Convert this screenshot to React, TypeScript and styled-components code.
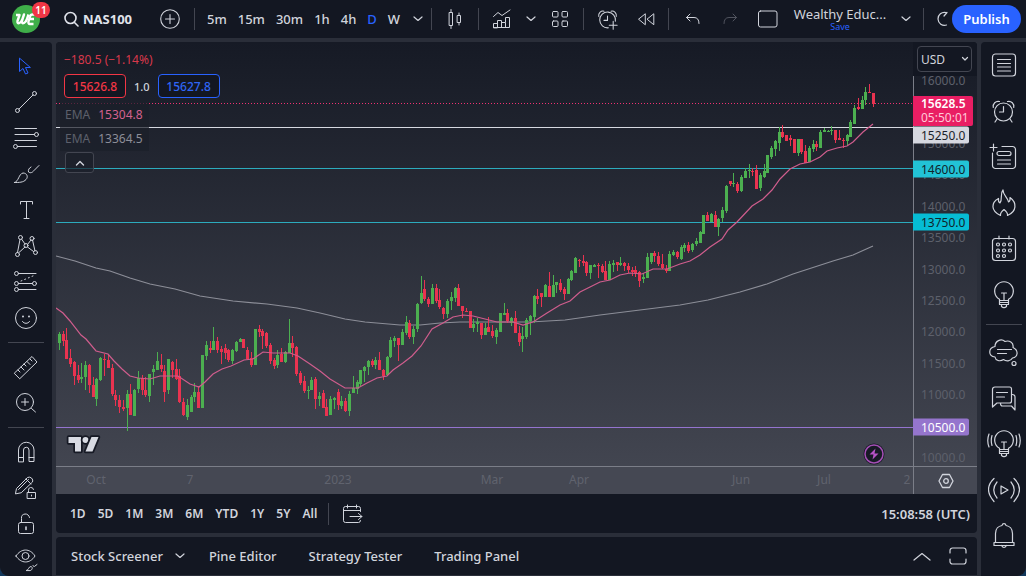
import React from "react";
import styled, { createGlobalStyle, css } from "styled-components";

const GlobalStyle = createGlobalStyle`
  * { box-sizing: border-box; }
  html, body { margin: 0; padding: 0; background: #12385c; }
  body, button, select {
    font-family: "Noto Sans", "Open Sans", sans-serif;
    font-size: 13px;
    color: #d1d4dc;
  }
  button { background: none; border: 0; padding: 0; cursor: pointer; }
  a { color: inherit; text-decoration: none; }
`;

const Page = styled.div`
  display: flex;
  flex-direction: column;
  gap: 4px;
  height: 100vh;
  min-height: 320px;
  overflow: hidden;
  background: #2a2e39;
  border-radius: 0 0 9px 9px;
`;

const TopBar = styled.header`
  display: flex;
  align-items: center;
  flex: none;
  height: 38px;
  padding: 0 5px 0 12px;
  background: #131722;
  overflow: hidden;
`;

const Logo = styled.a`
  position: relative;
  display: flex;
  flex: none;
  width: 28px;
  height: 28px;
  margin-right: 23px;
`;

const Badge = styled.span`
  position: absolute;
  left: 20px;
  top: -3px;
  width: 18px;
  height: 16px;
  border-radius: 8px;
  background: #f23645;
  color: #fff;
  font-size: 10px;
  line-height: 16px;
  font-weight: 600;
  text-align: center;
`;

const SymbolButton = styled.button`
  display: flex;
  align-items: center;
  gap: 4px;
  flex: none;
  width: 91px;
  font-weight: 700;
  color: #e0e3eb;
`;

const BarButton = styled.button<{ $w: number; $dim?: boolean; $end?: boolean }>`
  display: flex;
  align-items: center;
  justify-content: ${(p) => (p.$end ? "flex-end" : "center")};
  flex: none;
  width: ${(p) => p.$w}px;
  height: 38px;
  color: ${(p) => (p.$dim ? "#50535e" : "#d1d4dc")};
`;

const BarDivider = styled.span`
  flex: none;
  width: 1px;
  height: 22px;
  background: #434651;
`;

const Intervals = styled.div`
  display: flex;
  padding-left: 6px;
`;

const Interval = styled.button<{ $active?: boolean }>`
  padding: 0 5px 0 6px;
  line-height: 24px;
  font-weight: 500;
  color: ${(p) => (p.$active ? "#2962ff" : "#d1d4dc")};
`;

const LayoutName = styled.button`
  display: flex;
  flex-direction: column;
  align-items: center;
  flex: none;
  width: 98px;
  font-size: 13px;
  line-height: 16px;
  white-space: nowrap;
`;

const SaveText = styled.span`
  font-size: 9px;
  line-height: 10px;
  color: #2962ff;
`;

const Spacer = styled.span<{ $max?: number }>`
  flex: ${(p) => (p.$max ? `0 1 ${p.$max}px` : "1")};
`;

const Publish = styled.button`
  flex: none;
  width: 69px;
  height: 28px;
  border-radius: 14px;
  background: #2962ff;
  color: #fff;
  font-weight: 600;
`;

const Body = styled.div`
  display: grid;
  grid-template-columns: 52px minmax(0, 1fr) 45px;
  gap: 4px;
  flex: 1;
  min-height: 0;
`;

const SideDivider = styled.span`
  flex: none;
  width: 36px;
  height: 1px;
  margin: 6px 0;
  background: #434651;
`;

const SideBar = styled.nav<{ $right?: boolean }>`
  display: flex;
  flex-direction: column;
  align-items: center;
  overflow: hidden;
  background: #131722;
  ${(p) =>
    p.$right
      ? css`
          border-radius: 4px 0 0 0;
          ${SideDivider} {
            margin-bottom: 4px;
          }
        `
      : css`
          padding-top: 6px;
          border-radius: 0 4px 0 0;
        `}
`;

const SideButton = styled.button<{ $h: number; $active?: boolean }>`
  display: flex;
  align-items: center;
  justify-content: center;
  flex: none;
  width: 100%;
  height: ${(p) => p.$h}px;
  color: ${(p) => (p.$active ? "#2962ff" : "#d1d4dc")};
`;

const Center = styled.main`
  display: flex;
  flex-direction: column;
  gap: 4px;
  min-height: 0;
  padding-bottom: 1px;
`;

const ChartPanel = styled.section`
  display: flex;
  flex-direction: column;
  flex: 1;
  min-height: 0;
  border-radius: 4px;
  overflow: hidden;
  background: #131722;
`;

const ChartGrid = styled.div`
  display: grid;
  grid-template-columns: minmax(0, 1fr) 64px;
  grid-template-rows: minmax(0, 1fr) 28px;
  flex: 1;
  min-height: 0;
  background: linear-gradient(#161a25, #454853);
`;

const Plot = styled.div`
  position: relative;
  min-height: 0;
`;

const Drawing = styled.svg`
  position: absolute;
  inset: 0;
  width: 100%;
  height: 100%;
`;

const Legend = styled.div`
  position: absolute;
  left: 4px;
  top: 8px;
  display: flex;
  flex-direction: column;
  align-items: flex-start;
`;

const Change = styled.div`
  padding-left: 4px;
  line-height: 20px;
  font-size: 12px;
  color: #d8384b;
`;

const Quotes = styled.div`
  display: flex;
  align-items: center;
  gap: 8px;
  padding: 4px 4px 5px;
  font-size: 11px;
  font-weight: 500;
`;

const Quote = styled.button<{ $buy?: boolean }>`
  width: 62px;
  height: 24px;
  border: 1px solid ${(p) => (p.$buy ? "#2962ff" : "#f23645")};
  border-radius: 4px;
  background: #131722;
  font-size: 12px;
  font-weight: 500;
  color: ${(p) => (p.$buy ? "#2f66f5" : "#f23645")};
`;

const Study = styled.div<{ $color: string }>`
  display: flex;
  gap: 8px;
  width: 89px;
  padding-left: 5px;
  line-height: 24px;
  font-size: 12px;
  color: ${(p) => p.$color};
  background: rgba(27, 31, 42, 0.7);
`;

const StudyName = styled.span`
  color: #5d606b;
`;

const Collapse = styled.button`
  display: flex;
  align-items: center;
  justify-content: center;
  width: 29px;
  height: 21px;
  margin: 1px 0 0 5px;
  border: 1px solid #434651;
  border-radius: 3px;
  background: rgba(27, 31, 42, 0.7);
`;

const Watermark = styled.a`
  position: absolute;
  left: 9px;
  bottom: 10px;
  display: flex;
`;

const Flash = styled.button`
  position: absolute;
  left: 95.4%;
  bottom: 1px;
  display: flex;
  transform: translateX(-50%);
`;

const PriceAxis = styled.div`
  position: relative;
  min-height: 0;
`;

const AxisLine = styled.span`
  position: absolute;
  left: 0;
  top: 34px;
  bottom: 0;
  width: 1px;
  background: #7b7e88;
`;

const Price = styled.span`
  position: absolute;
  left: 8px;
  transform: translateY(-50%);
  font-size: 12px;
  line-height: 16px;
  color: #5d606b;
`;

const PriceTag = styled.span<{ $bg: string; $fg: string; $wide?: boolean }>`
  position: absolute;
  left: 0;
  width: ${(p) => (p.$wide ? 60 : 56)}px;
  padding-left: 8px;
  border-radius: 0 2px 2px 0;
  transform: translateY(-50%);
  font-size: 12px;
  font-weight: ${(p) => (p.$wide ? 600 : 400)};
  line-height: ${(p) => (p.$wide ? 14 : 17)}px;
  padding-block: ${(p) => (p.$wide ? 1 : 0)}px;
  background: ${(p) => p.$bg};
  color: ${(p) => p.$fg};
`;

const Countdown = styled.span`
  display: block;
  font-weight: 400;
  color: #ffc9d8;
`;

const CurrencyBox = styled.div`
  position: absolute;
  left: 0;
  right: 0;
  top: 0;
  height: 34px;
  padding: 4px 5px 0 4px;
  background: #131722;

  select {
    appearance: none;
    display: block;
    width: 100%;
    height: 26px;
    padding: 0 0 0 3px;
    border: 1px solid #434651;
    border-radius: 4px;
    background: #131722;
    font-size: 12px;
  }
  svg {
    position: absolute;
    right: 8px;
    top: 14px;
    pointer-events: none;
  }
`;

const TimeAxis = styled.div`
  position: relative;
  overflow: hidden;
  border-top: 1px solid #7b7e88;
  background: #454853;
`;

const TimeLabel = styled.span`
  position: absolute;
  transform: translateX(-50%);
  font-size: 12px;
  line-height: 26px;
  color: #60636e;
`;

const AxisCorner = styled.button`
  display: flex;
  align-items: center;
  justify-content: center;
  border-top: 1px solid #7b7e88;
  border-left: 1px solid #7b7e88;
  background: #454853;
`;

const RangeBar = styled.div`
  display: flex;
  align-items: center;
  flex: none;
  height: 39px;
  padding: 0 7px 0 8px;
`;

const Range = styled.button`
  padding: 0 6px;
  font-size: 12px;
  font-weight: 600;
`;

const Clock = styled.button`
  font-size: 13px;
  font-weight: 600;
`;

const TabPanel = styled.section`
  display: flex;
  align-items: center;
  flex: none;
  height: 38px;
  padding-left: 15px;
  border-radius: 4px 4px 0 0;
  background: #131722;
`;

const Tab = styled.button<{ $menu?: boolean }>`
  display: flex;
  align-items: center;
  gap: 12px;
  margin-right: ${(p) => (p.$menu ? 24 : 32)}px;
  font-weight: 500;
  white-space: nowrap;
`;

/* ---------- icons ---------- */

type IconProps = {
  w: number;
  h?: number;
  box?: string;
  sw?: number;
  children: React.ReactNode;
};

const Icon = ({ w, h = w, box, sw = 1, children }: IconProps) => (
  <svg
    width={w}
    height={h}
    viewBox={box || `0 0 ${w} ${h}`}
    fill="none"
    stroke="currentColor"
    strokeWidth={sw}
    strokeLinecap="round"
    strokeLinejoin="round"
    aria-hidden="true"
  >
    {children}
  </svg>
);

const ChevronDown = () => (
  <Icon w={10} h={6} sw={1.2}>
    <path d="M1 1l4 3.500L9 1" />
  </Icon>
);

const AlarmBody = () => (
  <>
    <circle cx="12" cy="13" r="9" />
    <path d="M12 7.500V13H8" />
    <path d="M1.800 8.500A5 5 0 0 1 8 2.500M22.200 8.500A5 5 0 0 0 16 2.500" />
    <path d="M5.500 20L3.500 23M18.500 20l2 3" />
  </>
);

const BulbBody = () => (
  <>
    <path d="M8.500 18.500v-1.300a9.300 9.300 0 1 1 9 0v1.300" />
    <path d="M13 18.500V11M10.500 11h5M8.500 18.500h9v4h-9zM8.500 20.500h9M10.500 22.500v2q2.500 2.500 5 0v-2" />
  </>
);

const leftTools: { label: string; active?: boolean; icon: React.ReactNode }[] = [
  {
    label: "Cursor",
    active: true,
    icon: (
      <Icon w={28}>
        <path d="M7.500 6.500v13l3.500-3 2.500 5.500 2.500-1-2.500-5.500h4.500z" />
      </Icon>
    ),
  },
  {
    label: "Trend line",
    icon: (
      <Icon w={28}>
        <circle cx="5.500" cy="22.500" r="2" />
        <circle cx="22.500" cy="5.500" r="2" />
        <path d="M7 21L21 7" />
      </Icon>
    ),
  },
  {
    label: "Fib retracement",
    icon: (
      <Icon w={28}>
        <path d="M3 4.500h21.500M3 10.500h19.500M3 16.500h21.500M6 22.500h18.500" />
        <circle cx="24.500" cy="10.500" r="2" />
        <circle cx="3.500" cy="22.500" r="2" />
      </Icon>
    ),
  },
  {
    label: "Brush",
    icon: (
      <Icon w={28}>
        <path d="M2.500 22.500c4.500-1 4-8.500 8.500-9.500 4 0 5.500 4 3 6.500-2.500 3-7 3-11.500 3z" />
        <path d="M19 7c-2 1-3 3-2.500 5 2 1.500 4 .5 5.500-1.500l5-5" />
      </Icon>
    ),
  },
  {
    label: "Text",
    icon: (
      <Icon w={28}>
        <path d="M8.500 8V5.500h12V8M14.500 5.500v17M12 22.500h5" />
      </Icon>
    ),
  },
  {
    label: "Pattern",
    icon: (
      <Icon w={28}>
        <path d="M5.500 20.500L8 7.500M9.500 7l3.500 5M15.500 12.500L19 8M20.500 8l2.500 11M7 20.500l6-5.500M15.500 15l6 4.500" />
        <circle cx="8.500" cy="5.500" r="2" />
        <circle cx="20" cy="6.500" r="2" />
        <circle cx="14" cy="13.500" r="2" />
        <circle cx="5.500" cy="22.500" r="2" />
        <circle cx="23.500" cy="20.500" r="2" />
      </Icon>
    ),
  },
  {
    label: "Position",
    icon: (
      <Icon w={28}>
        <path d="M7 5.500h17M7 15.500h13.500M7 21.500h17" />
        <path d="M9 13l13-5.500" strokeDasharray="1 3" />
        <circle cx="4.500" cy="5.500" r="2" />
        <circle cx="4.500" cy="15.500" r="2" />
        <circle cx="22.500" cy="15.500" r="2" />
        <circle cx="4.500" cy="21.500" r="2" />
      </Icon>
    ),
  },
  {
    label: "Icons",
    icon: (
      <Icon w={28}>
        <circle cx="14" cy="14" r="10.500" />
        <path d="M10.500 17.500c1.500 2.500 5.500 2.500 7 0" />
        <path d="M11 12.500v.1M17 12.500v.1" strokeWidth="2" />
      </Icon>
    ),
  },
  {
    label: "Measure",
    icon: (
      <Icon w={28}>
        <path d="M2.500 20L20 3.500l5 5.500L8 25.500z" />
        <path d="M6 17l2 2M9 14l3 3M12 11l2 2M15 8.500l3 3M18 6l2 2" />
      </Icon>
    ),
  },
  {
    label: "Zoom in",
    icon: (
      <Icon w={28}>
        <circle cx="13" cy="13" r="8.500" />
        <path d="M19.500 19.500L23.500 23M9.500 13h7M13 9.500v7" />
      </Icon>
    ),
  },
  {
    label: "Magnet",
    icon: (
      <Icon w={28}>
        <path d="M6.500 23.500V12a7.500 7.500 0 0 1 15.500 0v11.500h-5V12a2.700 2.700 0 0 0-5.500 0v11.500zM6.500 19.500h5M17 19.500h5" />
      </Icon>
    ),
  },
  {
    label: "Stay in drawing mode",
    icon: (
      <Icon w={28}>
        <path d="M3.500 19.500l1-5L15.500 3.500q2-1 4 .5 2 2 1 4L9.500 18.500zM6.500 15.500l10-10M14 5l5 5" />
        <path d="M15.500 18.500h8v6h-8zM16.500 18.500v-2a2.500 2.500 0 0 1 5-1M19.500 21v1" />
      </Icon>
    ),
  },
  {
    label: "Lock drawings",
    icon: (
      <Icon w={28}>
        <rect x="6.500" y="12.500" width="15" height="11" rx="2" />
        <path d="M9.500 12.500V8.500a4 4 0 0 1 8-1" />
        <path d="M14 17v2.500" strokeWidth="1.600" />
      </Icon>
    ),
  },
  {
    label: "Hide drawings",
    icon: (
      <Icon w={28}>
        <path d="M4 10c5-8 14-8 19 0-5 8-14 8-19 0z" />
        <circle cx="13.500" cy="10" r="3.500" />
        <path d="M14.500 24.500c2.500-.5 2-4 4.500-4 2 .5 1.500 3.500-.5 4zM21 19.500c.5 1.500 1 1.500 2 .5l2-1.500" />
      </Icon>
    ),
  },
];

const rightTools: { label: string; icon: React.ReactNode }[] = [
  {
    label: "Watchlist",
    icon: (
      <Icon w={30} sw={1.200}>
        <rect x="3.500" y="4" width="23" height="22" rx="3" />
        <path d="M8.500 9.500h13M8.500 13.500h13M8.500 17h13M8.500 21h13" />
      </Icon>
    ),
  },
  {
    label: "Alerts",
    icon: (
      <Icon w={25} box="0 0 24 25" sw={1.200}>
        <AlarmBody />
      </Icon>
    ),
  },
  {
    label: "Hotlists",
    icon: (
      <Icon w={30} sw={1.200}>
        <path d="M13 4.500h10.500a3 3 0 0 1 3 3v16a3 3 0 0 1-3 3h-17a3 3 0 0 1-3-3V11M1 5.500h7M4.500 2v7" />
        <rect x="8" y="9.500" width="14" height="4" rx="2" />
        <path d="M8.500 18h13M8.500 22h13" />
      </Icon>
    ),
  },
  {
    label: "Trending",
    icon: (
      <Icon w={30} sw={1.200}>
        <path d="M11.500 27.500C1.500 23 2 14.500 9.500 10.500q-.5 3.500 1.500 4.500C14 11 10.500 6 14 2c0 5.500 4.500 7 5.500 12q2-1 1.500-4.500c7 5 7 14-2.500 18 .5-2.500-1-4-3.500-6-2.500 2-4 3.500-3.500 6z" />
      </Icon>
    ),
  },
  {
    label: "Calendar",
    icon: (
      <Icon w={30} sw={1.200}>
        <rect x="3.500" y="4.500" width="23" height="22" rx="3" />
        <path d="M10 2v3M20 2v3" />
        {[
          [9, 10.500], [15, 10.500], [21, 10.500],
          [9, 16.500], [15, 16.500], [21, 16.500],
          [9, 22], [15, 22],
        ].map(([x, y]) => (
          <circle key={`${x}-${y}`} cx={x} cy={y} r="1.500" />
        ))}
      </Icon>
    ),
  },
  {
    label: "My ideas",
    icon: (
      <Icon w={26} h={28} box="0 -1 26 28" sw={1.200}>
        <BulbBody />
      </Icon>
    ),
  },
  {
    label: "Public chats",
    icon: (
      <Icon w={30} sw={1.200}>
        <path d="M6 9.500C6 4 12 1 16 4.500c4-1.500 9 1 8 6 6 3 5 9.500-.5 10.500-2 3.500-6.500 3.500-9 1.500-3.500 2.500-8 1-8.500-2.500C-1 19-1 11 6 9.500z" />
        <path d="M8.500 12.500h14M8.500 16.500h9" />
        <circle cx="25" cy="26.500" r="2" />
      </Icon>
    ),
  },
  {
    label: "Private chats",
    icon: (
      <Icon w={30} sw={1.200}>
        <path d="M6 4h14.500a2 2 0 0 1 2 2v12a2 2 0 0 1-2 2H8l-4.500 4V6.500A2.500 2.500 0 0 1 6 4zM7.500 9.500h11M7.500 14h8M22.500 11.500h1a2.500 2.500 0 0 1 2.500 2.500v13l-3.500-4h-9q-2 0-2-2.500" />
      </Icon>
    ),
  },
  {
    label: "Ideas stream",
    icon: (
      <Icon w={34} h={28} box="-4 -1 34 28" sw={1.200}>
        <BulbBody />
        <path d="M1 4.500q-1.500 5 0 10M-2 3q-2.500 6.500 0 13M25 4.500q1.500 5 0 10M28 3q2.500 6.500 0 13" />
      </Icon>
    ),
  },
  {
    label: "Streams",
    icon: (
      <Icon w={32} h={28} sw={1.200}>
        <path d="M13 10v8l7-4zM9 6q-6.500 8 0 16M6 2.500Q-5 13 6 25.500M23 6q6.500 8 0 16M26 2.500Q37 13 26 25.500" />
      </Icon>
    ),
  },
  {
    label: "Notifications",
    icon: (
      <Icon w={30} sw={1.200}>
        <path d="M6.500 21.500V12.500C6.500 8 9.500 5 13 4.500c.5-2.500 3.500-2.500 4 0 3.500.5 6.500 3.500 6.500 8v9M5 21.500h20v3H5zM12.500 24.500q2.500 4 5 0" />
      </Icon>
    ),
  },
];

/* ---------- chart data ---------- */

// One entry per session: direction, then high, body top, body bottom, low in plot units.
const SESSIONS = `
g332 334 343 350,r331 334 341 346,r328 340 359 359,r349 358 364 367,r361 362 376 385,r365 375 380 383,
g363 377 379 383,g361 365 377 390,r364 365 385 393,r377 385 397 397,g378 379 399 406,g357 358 380 381,
r354 359 360 376,r354 360 368 368,r364 368 394 396,r390 395 400 406,r395 400 407 413,r400 407 409 411,
g390 394 408 431,r384 394 415 415,g389 390 416 416,g371 378 389 393,r375 378 390 395,r377 390 395 397,
g374 374 396 402,g365 369 372 385,g352 361 370 370,r354 365 369 372,r365 371 392 402,g359 359 390 394,
r361 362 370 378,r359 369 379 380,r369 376 402 403,r398 402 415 416,g399 405 417 420,g395 397 412 412,
g383 392 397 402,r386 392 408 408,g355 355 408 408,g341 345 356 360,r341 348 350 353,g327 341 350 350,
r337 341 350 353,r346 349 352 364,r344 348 353 359,r349 350 360 362,g349 350 361 364,g341 342 351 352,
g338 339 342 342,r339 339 348 348,r347 350 359 359,r352 358 365 367,g329 329 365 365,r325 329 332 337,
r329 331 336 349,r332 333 346 348,r343 345 361 364,r358 360 366 369,g350 355 365 368,r348 354 362 362,
g351 352 362 363,g319 343 353 353,r336 343 348 357,r346 347 374 376,r371 373 383 385,r376 381 391 393,
g386 390 391 399,g377 380 390 390,r377 379 399 409,g392 396 399 406,r390 393 408 408,r399 407 416 416,
g396 399 415 415,g397 398 400 409,r389 392 405 410,g396 401 406 409,r398 401 411 412,g391 394 411 416,
g376 388 393 393,g380 382 389 394,g370 370 384 386,g366 367 371 382,g360 361 367 375,r359 361 365 367,
g357 360 365 369,r352 360 370 370,r369 370 376 380,g356 357 375 375,g337 340 357 358,g336 338 341 347,
r338 338 345 361,g329 332 345 345,g316 322 333 335,r320 323 337 339,g326 329 337 344,g303 304 329 332,
g276 293 303 304,r280 289 299 301,r297 299 304 307,g284 288 304 304,r284 288 301 303,r289 300 307 309,
r307 308 314 319,g299 301 314 318,g292 297 301 310,g287 288 298 302,r284 288 306 306,r306 306 311 318,
r308 311 312 312,r311 311 328 328,g319 324 328 332,g318 322 324 332,r323 323 335 339,g323 328 335 335,
r317 327 332 332,r325 331 336 338,g328 330 337 344,g313 313 332 332,g303 313 315 315,r309 313 321 323,
g317 318 323 326,r311 318 333 333,r326 333 342 346,g327 336 339 352,g318 320 337 339,g315 316 321 335,
g295 296 317 323,r289 296 299 304,r293 293 297 307,g284 285 297 297,r272 286 297 297,g275 285 297 297,
g282 282 285 293,r279 283 290 292,r287 289 294 300,g278 279 294 294,g270 271 280 281,g257 258 273 273,
r259 260 261 267,r255 261 263 266,r261 262 273 276,g265 265 273 279,g264 265 267 267,r263 265 266 278,
r264 266 272 273,r261 271 280 280,g261 264 280 280,g260 263 265 272,r262 262 265 271,g257 263 265 266,
r262 263 266 271,r263 266 270 273,r267 270 272 276,r266 270 273 277,r271 272 281 287,g273 277 279 283,
g253 257 278 278,g253 253 262 264,r251 253 256 262,r252 256 264 266,r254 264 268 269,r265 269 271 273,
g251 254 271 271,g250 252 255 256,r251 252 257 259,g245 247 259 260,g243 245 248 252,r242 245 251 253,
g243 244 250 252,g238 241 244 246,g231 232 243 243,g215 215 234 234,r212 215 221 221,g213 214 222 222,
r211 215 227 227,g218 219 227 236,g207 210 218 222,g185 186 211 213,r181 181 184 186,g173 183 184 187,
r182 184 191 193,g175 177 191 192,g168 171 178 178,g164 170 171 178,r168 171 172 176,r165 170 189 189,
g173 175 188 191,g164 171 177 178,g155 155 173 173,g146 148 157 159,g140 141 149 156,g127 132 143 151,
r125 132 137 138,r135 135 141 141,r135 138 140 146,r139 139 153 153,g139 139 153 156,r139 139 152 154,
r145 151 163 163,g146 148 162 162,g140 144 149 152,r141 144 147 151,g130 132 148 148,g128 130 132 132,
g130 131 132 132,g126 130 131 135,r130 130 140 143,r130 138 140 140,r138 140 141 148,g134 135 141 145,
g120 122 137 137,g105 108 124 124,r98 107 109 110,g96 100 109 109,g87 92 100 105,r84 92 93 93,
r93 93 104 107`
  .replace(/\n/g, "")
  .split(",")
  .map((entry, index) => {
    const [high, top, bottom, low] = entry.slice(1).split(" ").map(Number);
    const x = Math.round(58.8 + index * 3.769);
    return { up: entry[0] === "g", x, high, top, bottom, low };
  });

const FAST_EMA =
  "56,308 63,313 70,321 81,335 86,339 96,351 108,354 114,361 122,369 130,376 138,378 150,379 160,376 178,376 190,384 199,387 205,382 213,374 222,369 231,366 244,360 253,359 263,352 273,353 290,353 298,356 310,364 320,371 330,379 345,388 358,388 367,383 377,378 387,376 393,370 403,363 412,356 421,346 432,329 443,323 453,317 463,315 473,316 497,322 513,322 523,325 533,322 547,313 560,305 570,301 580,292 590,287 600,282 610,280 620,275 630,273 642,274 653,269 667,269 680,264 690,261 700,255 710,247 722,239 728,230 737,222 752,206 763,199 772,190 780,179 790,169 800,164 810,162 820,157 827,151 837,148 847,146 853,142 863,132 873,124";

const SLOW_EMA =
  "56,256 75,261 96,268 110,271 130,278 150,284 175,289 200,296 233,301 267,304 297,308 320,313 345,319 365,322 400,325 420,325 440,323 460,322 500,322 530,322 565,320 600,315 640,310 680,305 708,300 740,292 767,284 793,274 833,261 853,255 873,246";

const AXIS_PRICES = [16000, 15000, 14500, 14000, 13500, 13000, 12500, 12000, 11500, 11000, 10500, 10000];

const atUnit = (y: number) => `${((y - 42) / 424) * 100}%`;
const atPrice = (price: number) => atUnit(81 + (16000 - price) * 0.06285);

const MONTHS: [string, number][] = [
  ["Oct", 96], ["7", 190], ["2023", 338], ["Mar", 492], ["Apr", 579], ["Jun", 741], ["Jul", 824], ["2", 907],
];

const Chart = () => (
  <Drawing viewBox="56 42 857 424" preserveAspectRatio="none" aria-label="NAS100 daily candles">
    <g fill="none" strokeWidth="1">
      <path d="M56 103.500H913" stroke="#ee3272" strokeDasharray="1 2" />
      <path d="M56 127.500H913" stroke="#d6d8e0" />
      <path d="M56 168.500H913M56 222.500H913" stroke="#2cabbd" />
      <path d="M56 427.500H913" stroke="#9474cf" />
      <polyline points={SLOW_EMA} stroke="#8c8e98" strokeWidth="1.200" />
    </g>
    <g shapeRendering="crispEdges">
      {SESSIONS.map((s) => (
        <g key={s.x} fill={s.up ? "#4caf50" : "#e93350"}>
          <rect x={s.x} y={s.high} width="1" height={Math.max(1, s.low - s.high)} />
          <rect x={s.x - 1} y={s.top} width="3" height={Math.max(1, s.bottom - s.top)} />
        </g>
      ))}
    </g>
    <polyline points={FAST_EMA} fill="none" stroke="#cf5d8d" strokeWidth="1.200" />
  </Drawing>
);

export default function App() {
  return (
    <>
      <GlobalStyle />
      <Page>
        <TopBar>
          <Logo href="#" aria-label="Account">
            <svg width="28" height="28" viewBox="0 0 28 28" aria-hidden="true">
              <circle cx="14" cy="14" r="14" fill="#3fae49" />
              <g fill="none" stroke="#fff" strokeWidth="2.400" strokeLinejoin="round">
                <path d="M4 10h3.500L5.500 16q-.5 3 2 2 2-1 3-4l1.500-4.500-2 6.500q-.5 3 2 2 2-1 3-4l1.500-4.500" />
                <path d="M24 9.500h-3.500q-2 0-2.500 2l-1.500 5q-.5 2.500 1.500 2.500h3.500M17.500 14h4.500" />
              </g>
            </svg>
            <Badge>11</Badge>
          </Logo>
          <SymbolButton>
            <Icon w={16} sw={1.600}>
              <circle cx="7.500" cy="7" r="5.500" />
              <path d="M11.500 11.500L15 15" />
            </Icon>
            NAS100
          </SymbolButton>
          <BarButton $w={32} aria-label="Compare">
            <Icon w={20} sw={1.100}>
              <circle cx="10" cy="10" r="9.300" />
              <path d="M10 5.500v9M5.500 10h9" />
            </Icon>
          </BarButton>
          <Spacer $max={8} />
          <BarDivider />
          <Intervals>
            {["5m", "15m", "30m", "1h", "4h", "D", "W"].map((t) => (
              <Interval key={t} $active={t === "D"}>{t}</Interval>
            ))}
          </Intervals>
          <BarButton $w={26} aria-label="More intervals"><ChevronDown /></BarButton>
          <BarDivider />
          <BarButton $w={46} aria-label="Candles">
            <Icon w={16} h={20}>
              <path d="M2.500 3.500h3v13h-3zM4 .5v3M4 16.500v3M10.500 6.500h3v7h-3zM12 4v2.500M12 13.500V16" />
            </Icon>
          </BarButton>
          <BarDivider />
          <BarButton $w={46} aria-label="Indicators">
            <Icon w={20}>
              <path d="M1.500 18.500v-4h4v4zM5.500 18.500v-7h4v7M9.500 13.500h4v5M13.500 13V8.500h4v10H1.500M1.500 7.500L6 3.500l4 3 8-5.500" />
            </Icon>
          </BarButton>
          <BarButton $w={12} aria-label="Favourite indicators"><ChevronDown /></BarButton>
          <BarButton $w={46} aria-label="Templates">
            <Icon w={18}>
              <rect x="1.500" y="1.500" width="5.500" height="5.500" rx="1" />
              <rect x="11" y="1.500" width="5.500" height="5.500" rx="1" />
              <rect x="1.500" y="11" width="5.500" height="5.500" rx="1" />
              <rect x="11" y="11" width="5.500" height="5.500" rx="1" />
            </Icon>
          </BarButton>
          <BarDivider />
          <BarButton $w={46} aria-label="Create alert">
            <Icon w={21} box="0 0 24 24" sw={1.200}>
              <path d="M13 21.500A9 9 0 1 1 21 14M12 8v5H8M2 8.500A5 5 0 0 1 8 2.500M22 8.500A5 5 0 0 0 16 2.500M18.500 14v9M14 18.500h9" />
            </Icon>
          </BarButton>
          <BarButton $w={32} aria-label="Replay">
            <Icon w={18} h={14}>
              <path d="M8 2L1.500 7.200 8 12.500zM16.500 2L10 7.200l6.500 5.300z" />
            </Icon>
          </BarButton>
          <Spacer $max={6} />
          <BarDivider />
          <BarButton $w={46} aria-label="Undo">
            <Icon w={15} h={12}>
              <path d="M5 1L1.500 4.500 5 8M1.500 4.500H9q5 0 5 6" />
            </Icon>
          </BarButton>
          <BarButton $w={30} $dim aria-label="Redo">
            <Icon w={15} h={12}>
              <path d="M10 1l3.500 3.500L10 8M13.500 4.500H6q-5 0-5 6" />
            </Icon>
          </BarButton>
          <BarButton $w={46} aria-label="Select layout">
            <Icon w={20} h={18}>
              <rect x=".5" y="1" width="18.500" height="16" rx="2" />
            </Icon>
          </BarButton>
          <LayoutName>
            Wealthy Educ...
            <SaveText>Save</SaveText>
          </LayoutName>
          <BarButton $w={34} aria-label="Manage layouts"><ChevronDown /></BarButton>
          <BarDivider />
          <BarButton $w={24} $end aria-label="Quick search">
            <Icon w={12} h={18} sw={1.200}>
              <path d="M10 2.500A6.500 6.500 0 1 0 10.500 15M8 6l3-3.500" />
            </Icon>
          </BarButton>
          <Spacer />
          <Publish>Publish</Publish>
        </TopBar>

        <Body>
          <SideBar aria-label="Drawing tools">
            {leftTools.map((t, i) => (
              <React.Fragment key={t.label}>
                {(i === 8 || i === 10) && <SideDivider />}
                <SideButton $h={36} $active={t.active} aria-label={t.label}>{t.icon}</SideButton>
              </React.Fragment>
            ))}
          </SideBar>

          <Center>
            <ChartPanel>
              <ChartGrid>
                <Plot>
                  <Chart />
                  <Legend>
                    <Change>−180.5 (−1.14%)</Change>
                    <Quotes>
                      <Quote>15626.8</Quote>
                      1.0
                      <Quote $buy>15627.8</Quote>
                    </Quotes>
                    <Study $color="#d4628f"><StudyName>EMA</StudyName>15304.8</Study>
                    <Study $color="#8c8e98"><StudyName>EMA</StudyName>13364.5</Study>
                    <Collapse aria-label="Collapse legend">
                      <Icon w={10} h={6} sw={1.400}>
                        <path d="M1.500 5L5 1.500 8.500 5" />
                      </Icon>
                    </Collapse>
                  </Legend>
                  <Watermark href="#" aria-label="TradingView">
                    <svg width="36" height="24" viewBox="0 0 36 24" aria-hidden="true">
                      <g fill="#d9dbe3" stroke="#171a25" strokeWidth="3.500" strokeLinejoin="round" paintOrder="stroke">
                        <path d="M3.500 5h12.500v14.500H10V11H3.500z" />
                        <circle cx="20.500" cy="8" r="3" />
                        <path d="M26.500 5h7L27.500 19.500h-7z" />
                      </g>
                    </svg>
                  </Watermark>
                  <Flash aria-label="Latest news">
                    <svg width="22" height="22" viewBox="0 0 22 22" aria-hidden="true">
                      <circle cx="11" cy="11" r="10.500" fill="#171a25" />
                      <circle cx="11" cy="11" r="9" fill="#171a25" stroke="#a44fb5" strokeWidth="1.500" />
                      <path d="M12.500 5.500L6.500 11.500h4l-1 5 6-6h-4z" fill="#b653c6" />
                    </svg>
                  </Flash>
                </Plot>
                <PriceAxis>
                  {AXIS_PRICES.map((p) => (
                    <Price key={p} style={{ top: atPrice(p) }}>{p.toFixed(1)}</Price>
                  ))}
                  <AxisLine />
                  <CurrencyBox>
                    <select aria-label="Currency" defaultValue="USD">
                      <option>USD</option>
                      <option>EUR</option>
                    </select>
                    <Icon w={8} h={6} sw={1.200}>
                      <path d="M1.500 1.500L4 4l2.500-2.500" />
                    </Icon>
                  </CurrencyBox>
                  <PriceTag $bg="#d6d8e0" $fg="#1b1f2a" style={{ top: atUnit(134.5) }}>15250.0</PriceTag>
                  <PriceTag $bg="#22c3d6" $fg="#10242c" style={{ top: atPrice(14600) }}>14600.0</PriceTag>
                  <PriceTag $bg="#06bcd4" $fg="#10242c" style={{ top: atPrice(13750) }}>13750.0</PriceTag>
                  <PriceTag $bg="#9575cd" $fg="#ffffff" style={{ top: atPrice(10500) }}>10500.0</PriceTag>
                  <PriceTag $wide $bg="#e91e63" $fg="#ffffff" style={{ top: atUnit(110.5) }}>
                    15628.5
                    <Countdown>05:50:01</Countdown>
                  </PriceTag>
                </PriceAxis>
                <TimeAxis>
                  {MONTHS.map(([label, x]) => (
                    <TimeLabel key={label} style={{ left: `${((x - 56) / 857) * 100}%` }}>{label}</TimeLabel>
                  ))}
                </TimeAxis>
                <AxisCorner aria-label="Chart settings">
                  <Icon w={16} sw={1.300}>
                    <path d="M4.500 1.500h7L15 8l-3.500 6.500h-7L1 8z" />
                    <circle cx="8" cy="8" r="2.300" />
                  </Icon>
                </AxisCorner>
              </ChartGrid>
              <RangeBar>
                {["1D", "5D", "1M", "3M", "6M", "YTD", "1Y", "5Y", "All"].map((r) => (
                  <Range key={r}>{r}</Range>
                ))}
                <Spacer $max={5} />
                <BarDivider />
                <BarButton $w={46} aria-label="Go to date">
                  <Icon w={22} h={20}>
                    <path d="M19.500 7.500V4.500a2 2 0 0 0-2-2h-13a2 2 0 0 0-2 2v12a2 2 0 0 0 2 2h13a2 2 0 0 0 2-2M2.500 6.500h17M6.500 1v3M15.500 1v3M9 12.500h12M17.500 9.500l3.500 3-3.500 3" />
                  </Icon>
                </BarButton>
                <Spacer />
                <Clock>15:08:58 (UTC)</Clock>
              </RangeBar>
            </ChartPanel>
            <TabPanel>
              <Tab $menu>Stock Screener <ChevronDown /></Tab>
              <Tab>Pine Editor</Tab>
              <Tab>Strategy Tester</Tab>
              <Tab>Trading Panel</Tab>
              <Spacer />
              <BarButton $w={34} aria-label="Open panel">
                <Icon w={18} h={9} sw={1.200}>
                  <path d="M1 8l8-6.500L17 8" />
                </Icon>
              </BarButton>
              <BarButton $w={38} aria-label="Maximize panel">
                <Icon w={18} sw={1.200}>
                  <path d="M1 6V3.500A2.500 2.500 0 0 1 3.500 1H6M12 1h2.500A2.500 2.500 0 0 1 17 3.500V6M17 12v2.500a2.500 2.500 0 0 1-2.500 2.500H12M6 17H3.500A2.500 2.500 0 0 1 1 14.500V12M6 1h6M6 17h6" />
                </Icon>
              </BarButton>
            </TabPanel>
          </Center>

          <SideBar $right aria-label="Widgets">
            {rightTools.map((t, i) => (
              <React.Fragment key={t.label}>
                {i === 6 && <SideDivider />}
                <SideButton $h={46} aria-label={t.label}>{t.icon}</SideButton>
              </React.Fragment>
            ))}
          </SideBar>
        </Body>
      </Page>
    </>
  );
}
